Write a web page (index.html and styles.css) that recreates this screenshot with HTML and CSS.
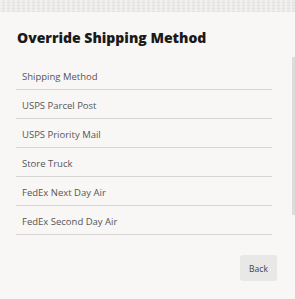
FILE: index.html
```html
<!DOCTYPE html>
<html lang="en">
<head>
    <meta charset="UTF-8">
    <title>Override Shipping Method</title>
    <link rel="stylesheet" href="styles.css">
</head>
<body>
    <div class="backdrop"></div>
    <div class="modal">
        <h1 class="modal-title">Override Shipping Method</h1>
        <ul class="method-list">
            <li class="method-item">Shipping Method</li>
            <li class="method-item">USPS Parcel Post</li>
            <li class="method-item">USPS Priority Mail</li>
            <li class="method-item">Store Truck</li>
            <li class="method-item">FedEx Next Day Air</li>
            <li class="method-item">FedEx Second Day Air</li>
        </ul>
        <div class="modal-footer">
            <button class="btn-back">Back</button>
        </div>
        <div class="scrollbar"></div>
    </div>
</body>
</html>
```

FILE: styles.css
```css
* {
    margin: 0;
    padding: 0;
    box-sizing: border-box;
}

body {
    width: 295px;
    height: 299px;
    overflow: hidden;
    background: #f8f7f5;
    font-family: 'Open Sans', 'Noto Sans', sans-serif;
}

.backdrop {
    height: 12px;
    background-color: #ebeae8;
    background-image: repeating-linear-gradient(90deg, rgba(255,255,255,0.35) 0 2px, transparent 2px 5px),
                      repeating-linear-gradient(0deg, rgba(0,0,0,0.03) 0 1px, transparent 1px 3px);
}

.modal {
    position: relative;
    height: 287px;
    background: #f8f7f5;
    padding: 17px 23px 0 16px;
}

.modal-title {
    font-size: 14px;
    font-weight: 800;
    color: #1a1a1a;
    line-height: 18px;
    padding-left: 1px;
}

.method-list {
    list-style: none;
    margin-top: 14px;
}

.method-item {
    height: 29px;
    padding: 4px 0 0 6px;
    line-height: 24px;
    font-size: 9.5px;
    color: #555;
    border-bottom: 1px solid #d6d5d3;
}

.modal-footer {
    display: flex;
    justify-content: flex-end;
    margin-top: 20px;
    margin-right: -5px;
}

.btn-back {
    width: 37px;
    height: 26px;
    border: none;
    border-radius: 3px;
    background: #e8e8e7;
    color: #444;
    font-family: inherit;
    font-size: 8.5px;
}

.scrollbar {
    position: absolute;
    top: 45px;
    right: 0;
    width: 3px;
    height: 158px;
    background: #dcdcdc;
}
```
